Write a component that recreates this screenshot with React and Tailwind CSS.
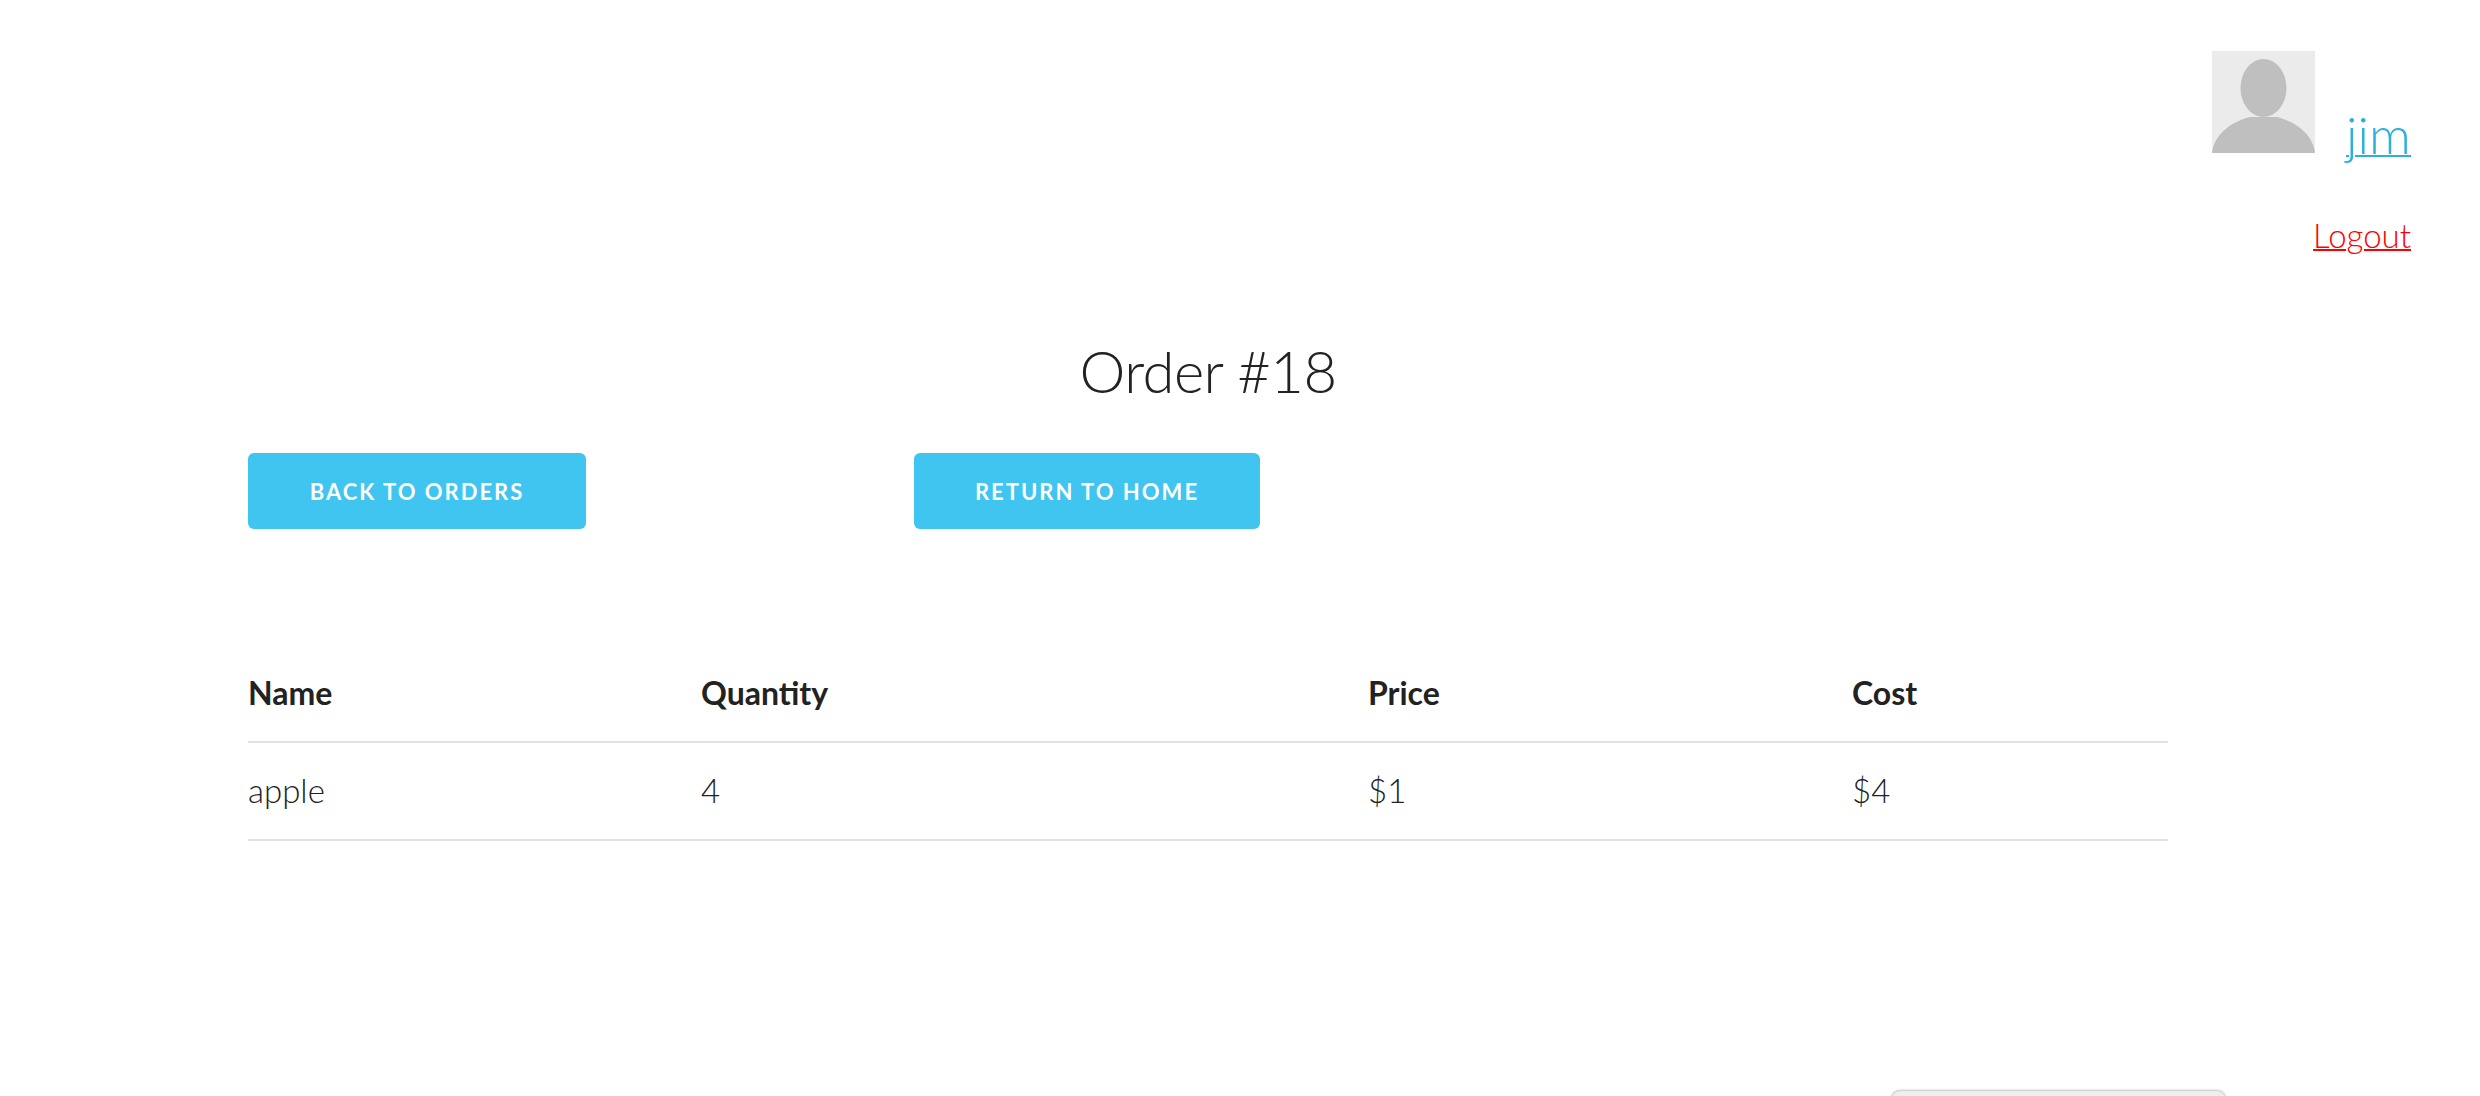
import React from 'react';

const rows = [{ name: 'apple', quantity: 4, price: '$1', cost: '$4' }];

const Avatar = () => (
  <svg viewBox="0 0 103 102" className="w-[103px] h-[102px] shrink-0 block">
    <rect width="103" height="102" fill="#ebebeb" />
    <ellipse cx="51.5" cy="37" rx="23" ry="29" fill="#bfbfbf" />
    <path d="M0 102 C2 84 18 71 38 66 L65 66 C85 71 101 84 103 102 Z" fill="#bfbfbf" />
  </svg>
);

const LinkButton = ({ children, className }) => (
  <a
    href="#"
    className={`h-[76px] flex items-center justify-center rounded-[6px] bg-[#40c4f0] text-white text-[22px] font-bold tracking-[2px] ${className}`}
  >
    {children}
  </a>
);

const App = () => {
  return (
    <div className="relative h-[1096px] overflow-hidden bg-white text-[#222222] font-['Lato','Open_Sans',sans-serif] font-light">
      <div className="flex flex-col items-end pt-[51px] pr-[69px]">
        <div className="flex items-end gap-[31px]">
          <Avatar />
          <a href="#" className="text-[52px] leading-[50px] -mb-[6px] text-[#2eb0dc] underline decoration-2">jim</a>
        </div>
        <a href="#" className="mt-[62px] text-[33px] leading-[40px] text-[#ff0000] underline decoration-2">Logout</a>
      </div>

      <div className="w-[1920px] ml-[248px]">
        <h1 className="mt-[80px] text-center text-[58px] leading-[72px] tracking-[-0.6px]">Order #18</h1>
        <div className="mt-[46px] flex">
          <LinkButton className="w-[338px]">BACK TO ORDERS</LinkButton>
          <LinkButton className="w-[346px] ml-[328px]">RETURN TO HOME</LinkButton>
        </div>

        <table className="mt-[115px] w-full table-fixed text-left text-[33px]">
          <colgroup>
            <col className="w-[453px]" />
            <col className="w-[667px]" />
            <col className="w-[484px]" />
            <col className="w-[316px]" />
          </colgroup>
          <thead>
            <tr className="h-[98px] border-b-2 border-[#e1e1e1]">
              <th className="font-bold text-[32px]">Name</th>
              <th className="font-bold text-[32px]">Quantity</th>
              <th className="font-bold text-[32px]">Price</th>
              <th className="font-bold text-[32px]">Cost</th>
            </tr>
          </thead>
          <tbody>
            {rows.map((row) => (
              <tr key={row.name} className="h-[98px] border-b-2 border-[#e1e1e1]">
                <td>{row.name}</td>
                <td>{row.quantity}</td>
                <td>{row.price}</td>
                <td>{row.cost}</td>
              </tr>
            ))}
          </tbody>
        </table>
      </div>

      <div className="absolute left-[1892px] top-[1091px] w-[333px] h-[20px] rounded-t-[8px] bg-[#eeeeee] shadow-[0_0_3px_rgba(0,0,0,0.5)]" />
    </div>
  );
};

export default App;
